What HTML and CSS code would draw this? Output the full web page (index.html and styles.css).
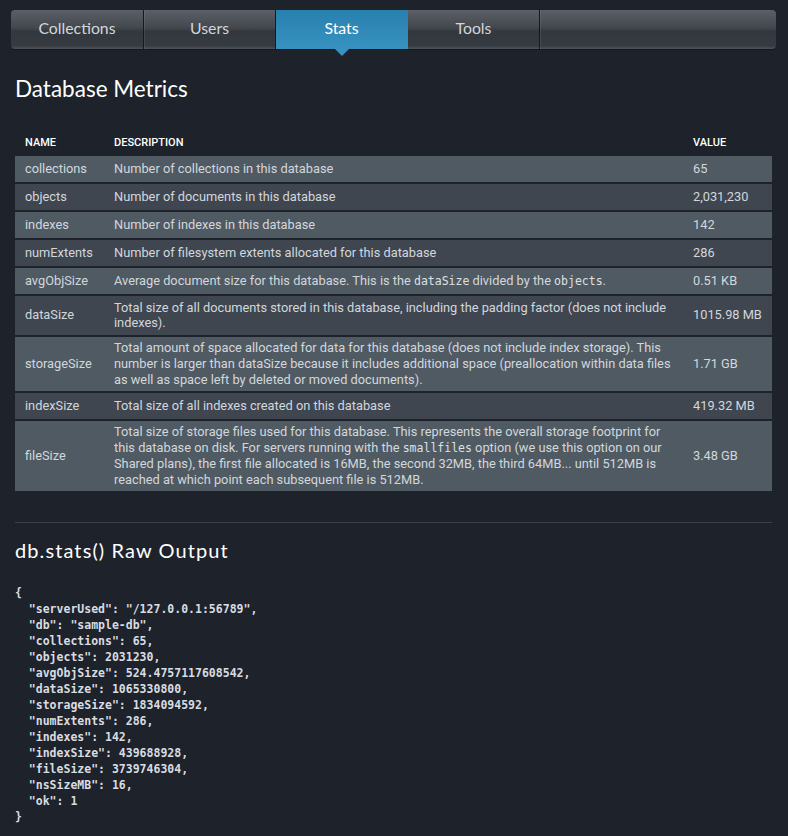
FILE: index.html
```html
<!DOCTYPE html>
<html>
<head>
<meta charset="utf-8">
<link rel="stylesheet" href="styles.css">
</head>
<body>
<div class="page">
  <nav class="tabs">
    <a class="tab">Collections</a>
    <a class="tab">Users</a>
    <a class="tab active">Stats</a>
    <a class="tab">Tools</a>
    <span class="tab-fill"></span>
  </nav>

  <h1 class="title">Database Metrics</h1>

  <table class="metrics">
    <thead>
      <tr><th class="c-name">Name</th><th>Description</th><th class="c-val">Value</th></tr>
    </thead>
    <tbody>
      <tr><td>collections</td><td>Number of collections in this database</td><td>65</td></tr>
      <tr><td>objects</td><td>Number of documents in this database</td><td>2,031,230</td></tr>
      <tr><td>indexes</td><td>Number of indexes in this database</td><td>142</td></tr>
      <tr><td>numExtents</td><td>Number of filesystem extents allocated for this database</td><td>286</td></tr>
      <tr><td>avgObjSize</td><td>Average document size for this database. This is the <code>dataSize</code> divided by the <code>objects</code>.</td><td>0.51 KB</td></tr>
      <tr><td>dataSize</td><td>Total size of all documents stored in this database, including the padding factor (does not include indexes).</td><td>1015.98 MB</td></tr>
      <tr><td>storageSize</td><td>Total amount of space allocated for data for this database (does not include index storage). This number is larger than dataSize because it includes additional space (preallocation within data files as well as space left by deleted or moved documents).</td><td>1.71 GB</td></tr>
      <tr><td>indexSize</td><td>Total size of all indexes created on this database</td><td>419.32 MB</td></tr>
      <tr><td>fileSize</td><td>Total size of storage files used for this database. This represents the overall storage footprint for this database on disk. For servers running with the <code>smallfiles</code> option (we use this option on our Shared plans), the first file allocated is 16MB, the second 32MB, the third 64MB... until 512MB is reached at which point each subsequent file is 512MB.</td><td>3.48 GB</td></tr>
    </tbody>
  </table>

  <hr class="rule">

  <h2 class="subtitle">db.stats() Raw Output</h2>

<pre class="raw">{
  "serverUsed": "/127.0.0.1:56789",
  "db": "sample-db",
  "collections": 65,
  "objects": 2031230,
  "avgObjSize": 524.4757117608542,
  "dataSize": 1065330800,
  "storageSize": 1834094592,
  "numExtents": 286,
  "indexes": 142,
  "indexSize": 439688928,
  "fileSize": 3739746304,
  "nsSizeMB": 16,
  "ok": 1
}</pre>
</div>
</body>
</html>
```

FILE: styles.css
```css
html, body {
  margin: 0;
  padding: 0;
  background: #1d222b;
}
body {
  font-family: "Lato", "Open Sans", sans-serif;
  color: #ffffff;
}
.page {
  width: 757px;
  margin-left: 15px;
  padding-top: 10px;
}

/* nav tabs */
.tabs {
  display: flex;
  height: 39px;
  margin: 0 -4px;
  border-radius: 4px;
  background: linear-gradient(to bottom, #5b5f66 0%, #43474e 45%, #33383f 55%, #363b42 92%, #4f545b 100%);
  box-shadow: 0 1px 0 rgba(0,0,0,0.3);
}
.tab {
  position: relative;
  width: 132px;
  display: flex;
  align-items: center;
  justify-content: center;
  padding-bottom: 4px;
  box-sizing: border-box;
  font-size: 15.8px;
  color: #d3d6da;
  border-right: 1px solid #15181c;
  box-shadow: 1px 0 0 rgba(255,255,255,0.08);
}
.tab:first-child { width: 133px; }
.tab.active {
  color: #ffffff;
  background: linear-gradient(to bottom, #2980af, #3792c0);
  border-right-color: transparent;
  box-shadow: none;
}
.tab.active::after {
  content: "";
  position: absolute;
  left: 50%;
  bottom: -7px;
  margin-left: -7px;
  border-left: 7px solid transparent;
  border-right: 7px solid transparent;
  border-top: 7px solid #3792c0;
}
.tab-fill { flex: 1; }

/* headings */
.title {
  margin: 26px 0 0 0;
  font-size: 22.5px;
  font-weight: 400;
  line-height: 28px;
  color: #ffffff;
}
.subtitle {
  margin: 14px 0 0 0;
  font-size: 20px;
  font-weight: 400;
  line-height: 26px;
  letter-spacing: 1.1px;
  color: #ffffff;
}

/* table */
.metrics {
  width: 757px;
  margin-top: 25px;
  border-collapse: separate;
  border-spacing: 0 2px;
  font-family: "Roboto", sans-serif;
  font-size: 12.8px;
  color: #d2d7dc;
  table-layout: fixed;
}
.metrics th {
  height: 24px;
  padding: 0 10px;
  text-align: left;
  font-size: 11px;
  font-weight: 500;
  text-transform: uppercase;
  color: #ffffff;
  vertical-align: middle;
}
.metrics .c-name { width: 69px; }
.metrics .c-val { width: 75px; padding-right: 4px; }
.metrics td {
  height: 19px;
  padding: 3.5px 10px;
  line-height: 15.75px;
  vertical-align: middle;
}
.metrics td:last-child { padding-right: 4px; }
.metrics tbody tr:nth-child(odd) td { background: #505a63; }
.metrics tbody tr:nth-child(even) td { background: #3f4650; }
.metrics code {
  font-family: "DejaVu Sans Mono", monospace;
  font-size: 11.5px;
  line-height: 1;
  color: #dde1e5;
}

.rule {
  margin: 29px 0 0 0;
  border: 0;
  height: 1px;
  background: #3b424b;
}

.raw {
  margin: 22px 0 0 0;
  font-family: "DejaVu Sans Mono", monospace;
  font-size: 11.5px;
  line-height: 16px;
  color: #d9dce0;
  font-weight: 600;
}
```
